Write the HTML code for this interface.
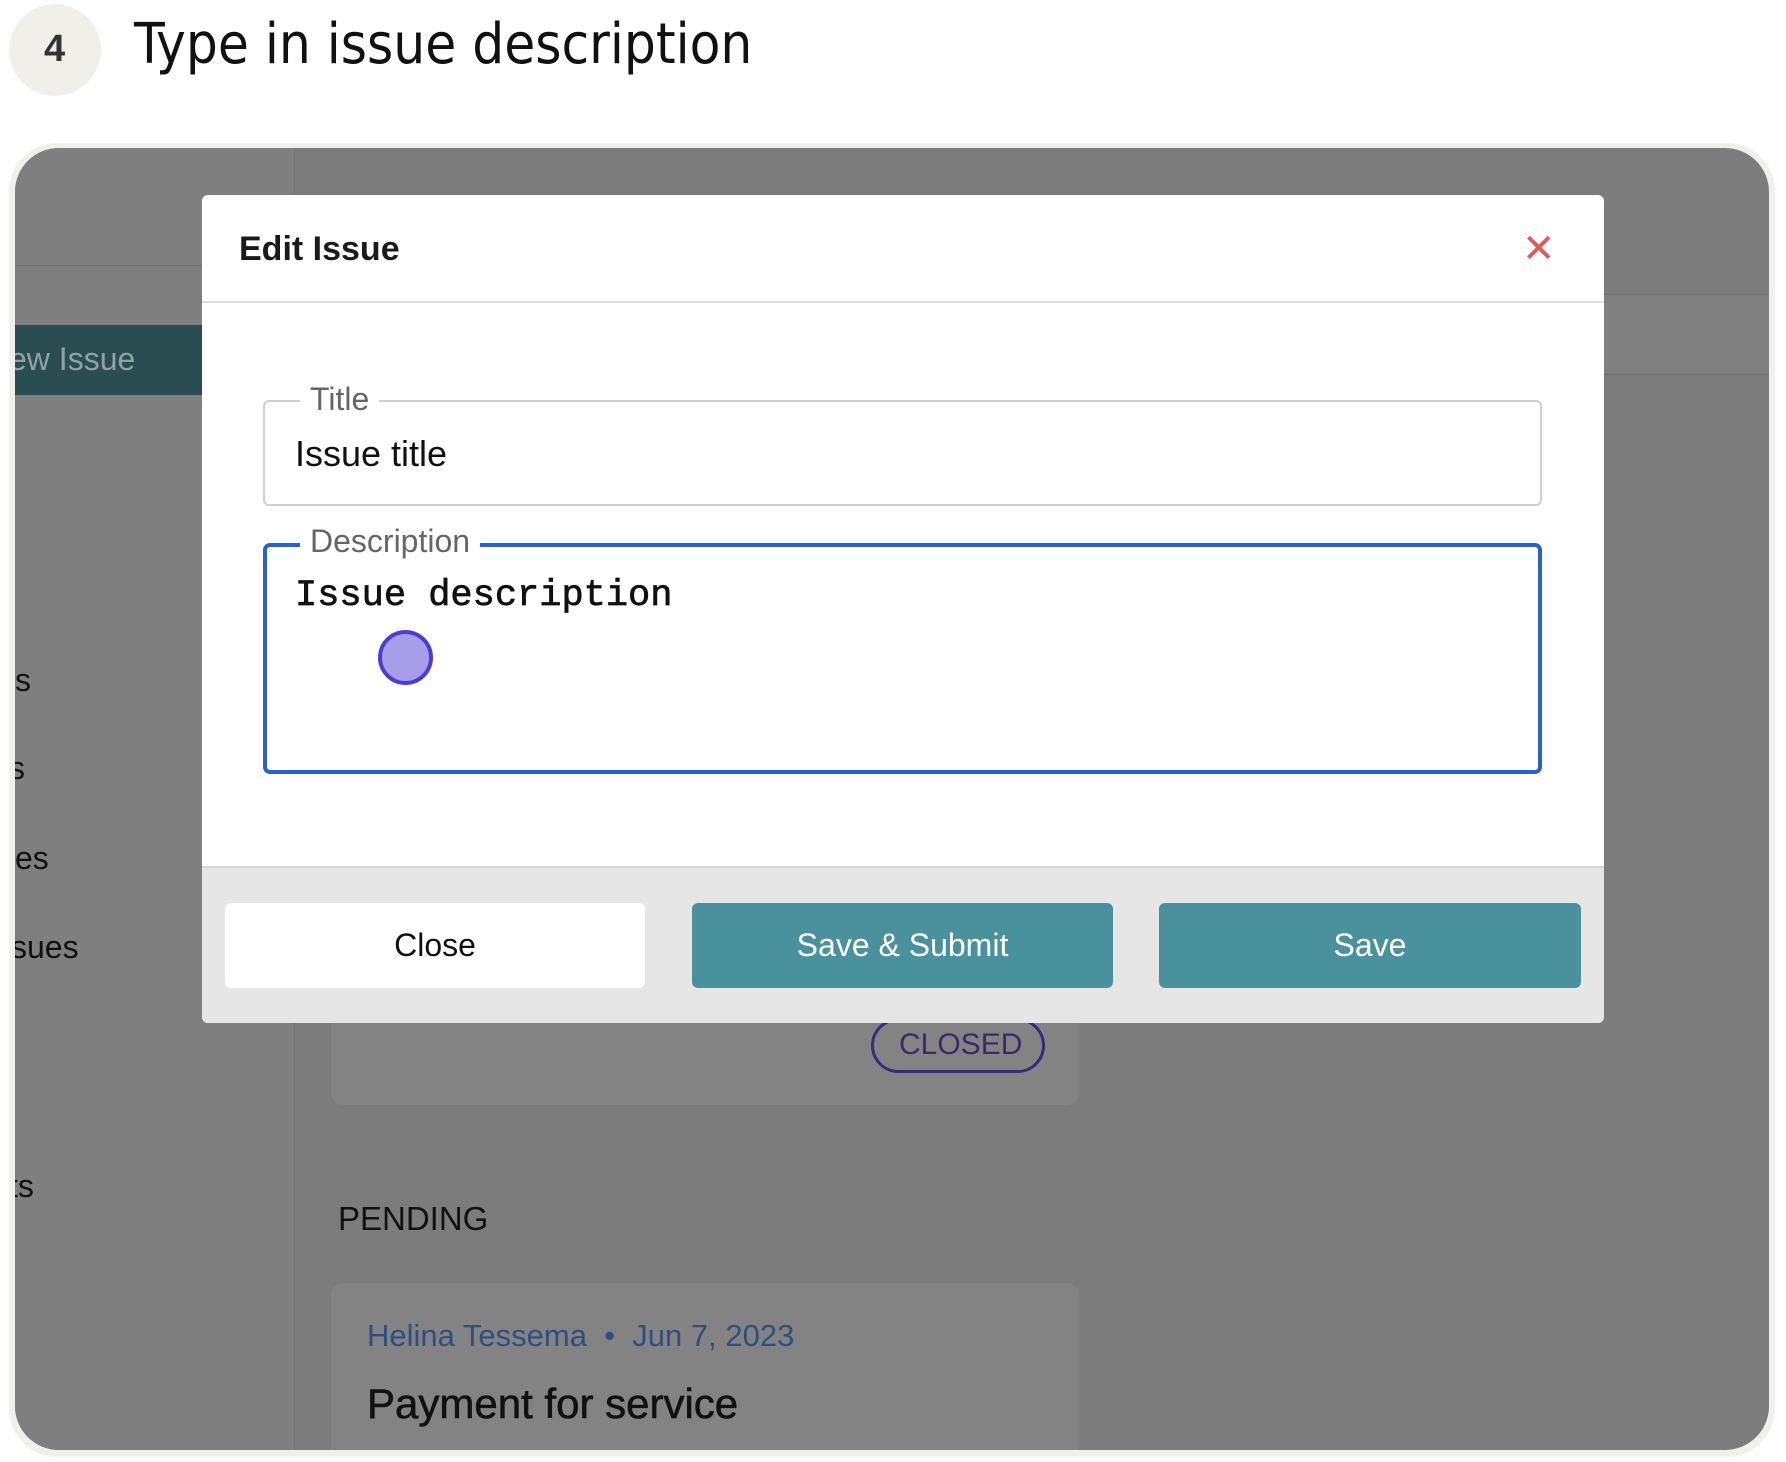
<!DOCTYPE html>
<html><head><meta charset="utf-8"><style>
*{margin:0;padding:0;box-sizing:border-box}
body{width:1786px;height:1462px;background:#fff;position:relative;overflow:hidden;font-family:"Liberation Sans",sans-serif}
.a{position:absolute}
.t{white-space:nowrap}
</style></head><body>
<div class="a" style="left:9px;top:4px;width:92px;height:92px;border-radius:50%;background:#f1efe9"></div>
<div class="a t" style="left:44px;top:28px;font-size:38px;font-weight:bold;color:#333">4</div>
<div class="a t" style="left:134px;top:12px;font-size:56px;color:#111;font-family:'DejaVu Sans Condensed','Liberation Sans',sans-serif">Type in issue description</div>

<div class="a" style="left:9px;top:143px;width:1766px;height:1314px;border-radius:48px;background:#f1efe9"></div>
<div class="a" style="left:15px;top:148px;width:1754px;height:1302px;border-radius:44px;background:#7c7c7c;overflow:hidden">
  <div class="a" style="left:0;top:0;width:279px;height:1302px;background:#7f7f7f"></div>
  <div class="a" style="left:279px;top:0;width:1px;height:1302px;background:#737373"></div>
  <div class="a" style="left:0;top:117px;width:279px;height:1px;background:#737373"></div>
  <div class="a" style="left:280px;top:146px;width:1474px;height:1px;background:#6f6f6f"></div>
  <div class="a" style="left:280px;top:226px;width:1474px;height:1px;background:#6f6f6f"></div>
  <div class="a" style="left:280px;top:147px;width:1474px;height:79px;background:#808080"></div>
  <div class="a" style="left:0;top:177px;width:190px;height:70px;background:#2a4d52"></div>
  <div class="a t" style="left:-6px;top:193px;font-size:32px;color:#8fa3a6">ew Issue</div>
  <div class="a t" style="left:0;top:514px;font-size:32px;color:#111">s</div>
  <div class="a t" style="left:-6px;top:602px;font-size:32px;color:#111">s</div>
  <div class="a t" style="left:0;top:692px;font-size:32px;color:#111">es</div>
  <div class="a t" style="left:-4px;top:781px;font-size:32px;color:#111">sues</div>
  <div class="a t" style="left:-6px;top:1020px;font-size:32px;color:#111">ts</div>
  <div class="a" style="left:316px;top:850px;width:748px;height:107px;border-radius:12px;background:#838383"></div>
  <div class="a" style="left:856px;top:870px;width:174px;height:55px;border:3px solid #3a2a7a;border-radius:28px"></div>
  <div class="a t" style="left:884px;top:880px;font-size:30px;color:#3a2a6a">CLOSED</div>
  <div class="a t" style="left:323px;top:1052px;font-size:33px;color:#111">PENDING</div>
  <div class="a" style="left:316px;top:1135px;width:748px;height:200px;border-radius:12px;background:#838383"></div>
  <div class="a t" style="left:352px;top:1170px;font-size:31px;color:#2e4f7f">Helina Tessema &nbsp;•&nbsp; Jun 7, 2023</div>
  <div class="a t" style="left:352px;top:1232px;font-size:42px;color:#111;-webkit-text-stroke:0.6px #111">Payment for service</div>
</div>

<div class="a" style="left:202px;top:195px;width:1402px;height:828px;background:#fff;border-radius:6px;overflow:hidden">
  <div class="a t" style="left:37px;top:35px;font-size:34px;font-weight:bold;color:#1a1a1a">Edit Issue</div>
  <div class="a t" style="left:1320px;top:31px;font-size:40px;color:#e05a5a">✕</div>
  <div class="a" style="left:0;top:106px;width:1402px;height:2px;background:#dedede"></div>
  <div class="a" style="left:61px;top:205px;width:1279px;height:106px;border:2px solid #cfcfcf;border-radius:6px"></div>
  <div class="a t" style="left:98px;top:186px;font-size:32px;color:#666;background:#fff;padding:0 10px">Title</div>
  <div class="a t" style="left:93px;top:238px;font-size:36px;color:#111">Issue title</div>
  <div class="a" style="left:61px;top:348px;width:1279px;height:231px;border:4px solid #2a62c8;border-radius:7px"></div>
  <div class="a t" style="left:98px;top:328px;font-size:32px;color:#666;background:#fff;padding:0 10px">Description</div>
  <div class="a t" style="left:93px;top:380px;font-size:37px;color:#111;font-family:'Liberation Mono',monospace;-webkit-text-stroke:0.7px #111">Issue description</div>
  <div class="a" style="left:176px;top:435px;width:55px;height:55px;border-radius:50%;background:#a79ee9;border:4px solid #4a3ed0"></div>
  <div class="a" style="left:0;top:671px;width:1402px;height:157px;background:#e6e6e6;border-top:2px solid #d6d6d6"></div>
  <div class="a" style="left:23px;top:708px;width:420px;height:85px;background:#fff;border-radius:6px;font-size:32px;color:#111;display:flex;align-items:center;justify-content:center">Close</div>
  <div class="a" style="left:490px;top:708px;width:421px;height:85px;background:#4a919e;border-radius:6px;font-size:32px;color:#fff;display:flex;align-items:center;justify-content:center">Save &amp; Submit</div>
  <div class="a" style="left:957px;top:708px;width:422px;height:85px;background:#4a919e;border-radius:6px;font-size:32px;color:#fff;display:flex;align-items:center;justify-content:center">Save</div>
</div>
</body></html>
